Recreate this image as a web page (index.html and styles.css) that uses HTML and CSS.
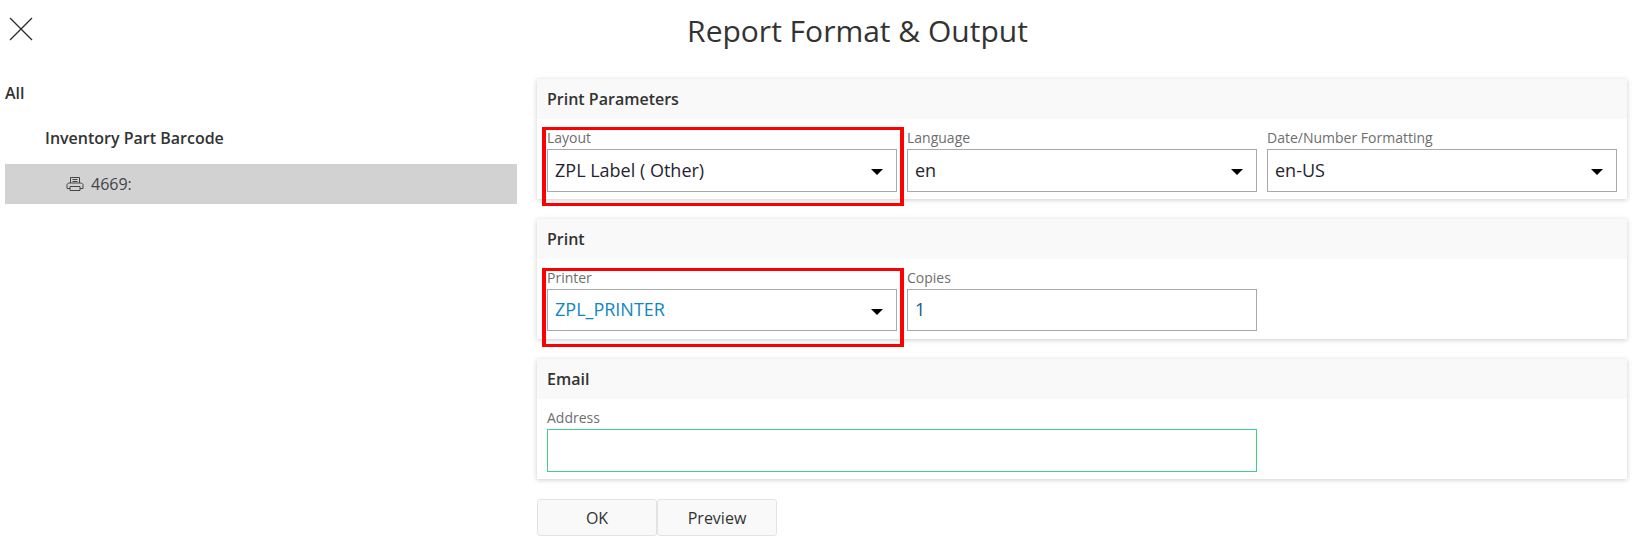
FILE: index.html
```html
<!DOCTYPE html>
<html lang="en">
<head>
<meta charset="utf-8">
<title>Report Format &amp; Output</title>
<link rel="stylesheet" href="styles.css">
</head>
<body>
<header class="topbar">
  <button class="close" aria-label="Close">
    <svg width="24" height="24" viewBox="0 0 24 24"><path d="M1 1 L23 23 M23 1 L1 23" fill="none" stroke="#2b2b2b" stroke-width="1.3"/></svg>
  </button>
  <h1 class="title">Report Format &amp; Output</h1>
</header>
<main class="layout">
  <nav class="tree">
    <div class="tree-all">All</div>
    <div class="tree-report">Inventory Part Barcode</div>
    <div class="tree-item">
      <svg class="printer" width="18" height="16" viewBox="0 0 18 16"><path d="M4.5 7V1.5H13.5V7M6.5 3.5H11.5M6.5 5.5H11.5M4 12.5H1V8.5L2.5 7H15.5L17 8.5V12.5H14M4 10.5H14V14.5H4Z" fill="none" stroke="#444" stroke-width="1"/></svg>
      <span>4669:</span>
    </div>
  </nav>
  <div class="content">
    <section class="card">
      <h2 class="card-head">Print Parameters</h2>
      <div class="card-body">
        <div class="field marked">
          <label class="label">Layout</label>
          <div class="control"><span>ZPL Label ( Other)</span><i class="caret"></i></div>
        </div>
        <div class="field">
          <label class="label">Language</label>
          <div class="control"><span>en</span><i class="caret"></i></div>
        </div>
        <div class="field">
          <label class="label">Date/Number Formatting</label>
          <div class="control"><span>en-US</span><i class="caret"></i></div>
        </div>
      </div>
    </section>
    <section class="card">
      <h2 class="card-head">Print</h2>
      <div class="card-body">
        <div class="field marked lower">
          <label class="label">Printer</label>
          <div class="control short link"><span>ZPL_PRINTER</span><i class="caret"></i></div>
        </div>
        <div class="field">
          <label class="label">Copies</label>
          <div class="control short"><span class="number">1</span></div>
        </div>
      </div>
    </section>
    <section class="card">
      <h2 class="card-head">Email</h2>
      <div class="card-body">
        <div class="field wide">
          <label class="label">Address</label>
          <div class="control required"></div>
        </div>
      </div>
    </section>
    <div class="actions">
      <button class="btn">OK</button>
      <button class="btn">Preview</button>
    </div>
  </div>
</main>
</body>
</html>
```
FILE: styles.css
```css
*, *::after { box-sizing: border-box; }
html, body { margin: 0; padding: 0; }
body {
  width: 1639px;
  height: 542px;
  overflow: hidden;
  background: #fff;
  color: #333;
  font-family: "Open Sans", sans-serif;
  font-size: 16px;
}
.topbar {
  display: flex;
  align-items: center;
  justify-content: center;
  position: relative;
  height: 60px;
  padding-left: 76px;
  margin-bottom: 2px;
}
.close {
  position: absolute;
  left: 9px;
  top: 17px;
  padding: 0;
  border: 0;
  background: none;
  line-height: 0;
}
.title {
  margin: 0;
  font-size: 30px;
  font-weight: 400;
  color: #333;
}
.layout {
  display: flex;
  padding: 17px 12px 0 5px;
}
.tree { width: 512px; margin-right: 20px; flex: none; }
.tree-all { height: 40px; line-height: 28px; font-weight: 600; font-size: 16px; }
.tree-report { height: 45px; padding-left: 40px; line-height: 38px; font-weight: 600; font-size: 16px; }
.tree-item {
  display: flex;
  align-items: center;
  gap: 7px;
  height: 40px;
  padding-left: 61px;
  background: #d2d2d2;
  font-size: 16px;
  color: #444;
}
.content { width: 1090px; flex: none; }
.card {
  background: #fff;
  box-shadow: 0 1px 5px rgba(0, 0, 0, .2);
  margin-bottom: 20px;
  height: 120px;
}
.card-head {
  margin: 0;
  height: 40px;
  padding: 0 10px;
  line-height: 40px;
  background: #f9f9f9;
  font-size: 16px;
  font-weight: 600;
}
.card-body {
  display: flex;
  gap: 10px;
  padding: 8px 10px 0;
}
.field { width: 350px; position: relative; }
.field.wide { width: 710px; }
.field.marked::after {
  content: "";
  position: absolute;
  left: -5px;
  top: 0;
  right: -7px;
  height: 79px;
  border-style: solid;
  border-color: #f00;
  border-width: 3px 4px;
  pointer-events: none;
}
.field.lower::after { top: 1px; }
.label {
  display: block;
  height: 22px;
  line-height: 22px;
  font-size: 14px;
  color: #6e6e6e;
}
.control {
  display: flex;
  align-items: center;
  justify-content: space-between;
  height: 43px;
  padding: 0 13px 2px 7px;
  border: 1px solid #a9a9a9;
  font-size: 18px;
  color: #1f2530;
}
.control.short { height: 42px; }
.control.link { color: #0f87bf; }
.control.required { border-color: #3ecf8e; }
.number { color: #0d5c86; }
.caret {
  width: 0;
  height: 0;
  margin-top: 5px;
  border-left: 6px solid transparent;
  border-right: 6px solid transparent;
  border-top: 6px solid #000;
}
.actions { display: flex; }
.btn {
  width: 120px;
  height: 37px;
  padding: 0;
  border: 1px solid #e3e3e3;
  border-radius: 3px;
  background: #f9f9f9;
  font-family: inherit;
  font-size: 16px;
  color: #333;
}
```
